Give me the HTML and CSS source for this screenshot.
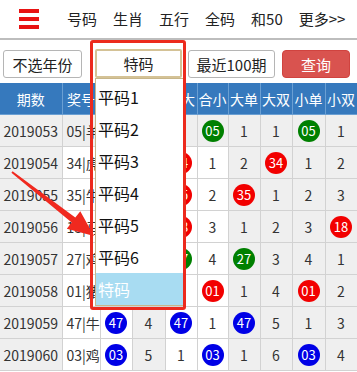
FILE: index.html
```html
<!DOCTYPE html>
<html lang="zh-CN">
<head>
    <meta charset="UTF-8">
    <meta name="viewport" content="width=device-width, initial-scale=1.0">
    <title>特码走势</title>
    <link rel="stylesheet" href="styles.css">
</head>
<body>
    <div class="topbar">
        <div class="menu-icon"><span></span><span></span><span></span></div>
        <nav class="nav">
            <a href="#">号码</a>
            <a href="#">生肖</a>
            <a href="#">五行</a>
            <a href="#">全码</a>
            <a href="#">和50</a>
            <a href="#">更多&gt;&gt;</a>
        </nav>
    </div>

    <div class="filters">
        <button class="btn btn-year">不选年份</button>
        <div class="select-wrap">
            <div class="select">特码</div>
            <ul class="options">
                <li>平码1</li>
                <li>平码2</li>
                <li>平码3</li>
                <li>平码4</li>
                <li>平码5</li>
                <li>平码6</li>
                <li class="active">特码</li>
            </ul>
        </div>
        <button class="btn btn-range">最近100期</button>
        <button class="btn btn-query">查询</button>
    </div>

    <table class="trend-table">
        <colgroup>
            <col style="width:62px"><col style="width:38px"><col style="width:32px"><col style="width:33px">
            <col style="width:32px"><col style="width:31px"><col style="width:32px"><col style="width:32px">
            <col style="width:33px"><col style="width:32px">
        </colgroup>
        <thead>
            <tr>
                <th>期数</th><th>奖号</th><th>合单</th><th>合双</th><th>合大</th>
                <th>合小</th><th>大单</th><th>大双</th><th>小单</th><th>小双</th>
            </tr>
        </thead>
        <tbody>
            <tr>
                <td>2019053</td><td class="code">05|羊</td><td><span class="ball green">05</span></td><td>3</td><td>2</td>
                <td><span class="ball green">05</span></td><td>1</td><td>1</td><td><span class="ball green">05</span></td><td>1</td>
            </tr>
            <tr>
                <td>2019054</td><td class="w code">34|虎</td><td class="w"><span class="ball red">34</span></td><td>4</td><td class="w"><span class="ball red">34</span></td>
                <td class="w">1</td><td>2</td><td><span class="ball red">34</span></td><td>1</td><td>2</td>
            </tr>
            <tr>
                <td>2019055</td><td class="w code">35|牛</td><td class="w">1</td><td><span class="ball red">35</span></td><td class="w"><span class="ball red">35</span></td>
                <td class="w">2</td><td><span class="ball red">35</span></td><td>1</td><td>2</td><td>3</td>
            </tr>
            <tr>
                <td>2019056</td><td class="w code">18|马</td><td class="w"><span class="ball red">18</span></td><td>1</td><td class="w"><span class="ball red">18</span></td>
                <td class="w">3</td><td>1</td><td>2</td><td>3</td><td><span class="ball red">18</span></td>
            </tr>
            <tr>
                <td>2019057</td><td class="w code">27|鸡</td><td class="w"><span class="ball green">27</span></td><td>2</td><td class="w"><span class="ball green">27</span></td>
                <td class="w">4</td><td><span class="ball green">27</span></td><td>3</td><td>4</td><td>1</td>
            </tr>
            <tr>
                <td>2019058</td><td class="w code">01|猪</td><td class="w"><span class="ball red">01</span></td><td>3</td><td class="w">1</td>
                <td class="w"><span class="ball red">01</span></td><td>1</td><td>4</td><td><span class="ball red">01</span></td><td>2</td>
            </tr>
            <tr>
                <td>2019059</td><td class="w code">47|牛</td><td class="w"><span class="ball blue">47</span></td><td>4</td><td class="w"><span class="ball blue">47</span></td>
                <td class="w">1</td><td><span class="ball blue">47</span></td><td>5</td><td>1</td><td>3</td>
            </tr>
            <tr>
                <td>2019060</td><td class="w code">03|鸡</td><td class="w"><span class="ball blue">03</span></td><td>5</td><td class="w">1</td>
                <td class="w"><span class="ball blue">03</span></td><td>1</td><td>6</td><td><span class="ball blue">03</span></td><td>4</td>
            </tr>
        </tbody>
    </table>

    <!-- annotation overlays -->
    <div class="mark-box"></div>
    <svg class="mark-arrow" width="357" height="372" viewBox="0 0 357 372">
        <polygon points="11.4,172.8 12.6,171.2 75.3,217.6 80.3,211.3 94,236 66.8,228.7 71.7,222.4" fill="#f0291f"/>
    </svg>
</body>
</html>
```

FILE: styles.css
```css
body {
    margin: 0;
    padding: 0;
    font-family: "Noto Sans CJK SC", "Liberation Sans", sans-serif;
    color: #222;
    background-color: #fff;
    position: relative;
    width: 357px;
    height: 372px;
    overflow: hidden;
}

.topbar {
    display: flex;
    align-items: center;
    height: 38px;
    border-bottom: 2px solid #bdbdbd;
    background-color: #fff;
}

.menu-icon {
    display: flex;
    flex-direction: column;
    gap: 4px;
    width: 20px;
    margin-left: 19px;
    margin-right: 28px;
}

.menu-icon span {
    display: block;
    height: 4px;
    background-color: #e81313;
}

.nav {
    display: flex;
    gap: 16px;
}

.nav a {
    color: #222;
    text-decoration: none;
    font-size: 15px;
    line-height: 20px;
}

.filters {
    display: flex;
    align-items: center;
    padding: 10px 0 5px 3px;
    height: 28px;
}

.btn {
    height: 28px;
    padding: 0;
    font-family: inherit;
    font-size: 15px;
    color: #222;
    background-color: #fff;
    border: 1px solid #b5b5b5;
    border-radius: 3px;
}

.btn-year {
    width: 79px;
}

.select-wrap {
    position: relative;
    margin-left: 13px;
}

.select {
    box-sizing: border-box;
    width: 87px;
    height: 29px;
    line-height: 25px;
    text-align: center;
    font-size: 15px;
    border: 2px solid #d4c296;
    border-radius: 2px;
    margin-top: -1px;
}

.options {
    position: absolute;
    top: 28px;
    left: 0;
    width: 89px;
    margin: 0;
    padding: 0;
    list-style: none;
    background-color: #fff;
    border: 1px solid #c7b68a;
    z-index: 2;
}

.options li {
    height: 32px;
    line-height: 32px;
    padding-left: 2px;
    font-size: 16px;
    color: #111;
}

.options li:first-child {
    margin-top: 2px;
}

.options li.active {
    background-color: #a8dcf2;
    color: #fff;
}

.btn-range {
    width: 87px;
    margin-left: 6px;
}

.btn-query {
    width: 68px;
    margin-left: 7px;
    color: #fff;
    background-color: #d9534f;
    border-color: #d0433f;
    border-radius: 4px;
}

.trend-table {
    width: 357px;
    table-layout: fixed;
    border-collapse: collapse;
    font-size: 14px;
}

.trend-table th {
    height: 31px;
    padding: 0;
    background-color: #3679bd;
    color: #fff;
    font-weight: normal;
    border: 1px solid #6a9fd3;
    border-top: none;
}

.trend-table td {
    height: 31px;
    padding: 0;
    text-align: center;
    color: #333;
    background-color: #efefef;
    border: 1px solid #d2d2d2;
    white-space: nowrap;
    overflow: hidden;
}

.trend-table td.w {
    background-color: #fff;
}

.trend-table td.code {
    text-align: left;
    padding-left: 4px;
}

.trend-table th:first-child,
.trend-table td:first-child {
    border-left: none;
}

.ball {
    display: inline-block;
    width: 22px;
    height: 22px;
    line-height: 22px;
    border-radius: 50%;
    color: #fff;
    font-size: 13px;
    text-align: center;
    vertical-align: middle;
}

.ball.green { background-color: #008000; }
.ball.red { background-color: #f20000; }
.ball.blue { background-color: #0000e6; }

.mark-box {
    position: absolute;
    left: 90px;
    top: 40px;
    width: 90px;
    height: 264px;
    border: 3px solid #ec2a1d;
    border-radius: 3px;
    z-index: 3;
}

.mark-arrow {
    position: absolute;
    left: 0;
    top: 0;
    z-index: 4;
}
```
